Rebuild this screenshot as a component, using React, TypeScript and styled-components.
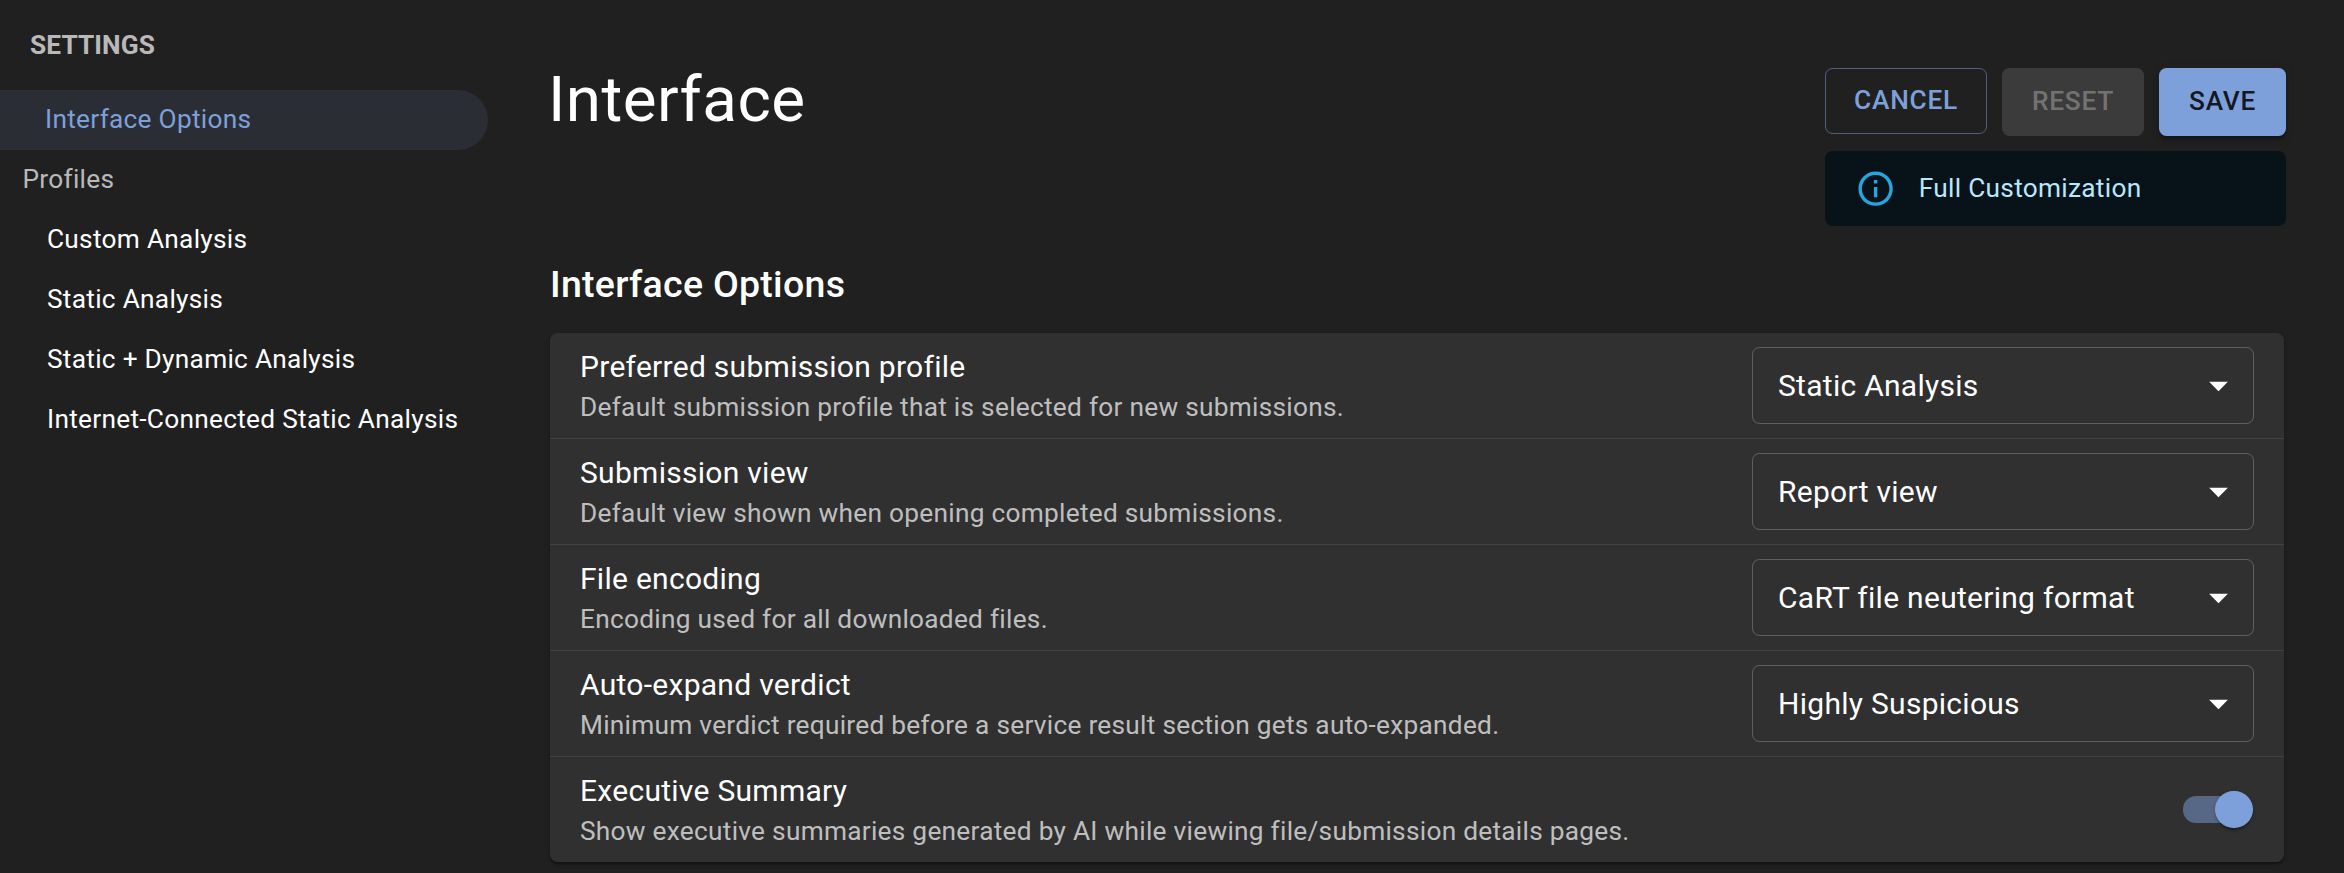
import React, { useState } from "react";
import styled, { createGlobalStyle } from "styled-components";

const GlobalStyle = createGlobalStyle`
  * { box-sizing: border-box; }
  body {
    margin: 0;
    background: #202020;
    color: #fff;
    font-family: Roboto, "Liberation Sans", sans-serif;
    font-size: 26.25px;
    overflow: hidden;
  }
`;

const Page = styled.div`
  display: flex;
  height: 873px;
  overflow: hidden;
`;

const Sidebar = styled.nav`
  width: 488px;
  flex: none;
  display: flex;
  flex-direction: column;
`;

const SidebarTitle = styled.div`
  height: 90px;
  padding-left: 30px;
  line-height: 90px;
  font-weight: 700;
  letter-spacing: 0.004em;
  color: rgba(255, 255, 255, 0.7);
`;

const NavGroup = styled.div`
  height: 60px;
  padding-left: 22.5px;
  line-height: 58px;
  letter-spacing: 0.01071em;
  color: rgba(255, 255, 255, 0.7);
`;

const NavItem = styled.a<{ $active?: boolean }>`
  height: 60px;
  padding-left: ${(p) => (p.$active ? 45 : 47)}px;
  line-height: 58px;
  letter-spacing: 0.01071em;
  white-space: nowrap;
  border-radius: 0 30px 30px 0;
  color: ${(p) => (p.$active ? "#7da0db" : "#fff")};
  background: ${(p) => (p.$active ? "#2b2d35" : "transparent")};
`;

const Main = styled.main`
  width: 1736px;
  margin-left: 62px;
  flex: none;
`;

const Header = styled.header`
  display: flex;
  justify-content: space-between;
  padding-top: 68px;
  height: 246px;
`;

const Title = styled.h1`
  margin: -7px 0 0 -2px;
  font-size: 63.75px;
  font-weight: 400;
  line-height: 78px;
  letter-spacing: 0.00735em;
`;

const Actions = styled.div`
  display: flex;
  flex-direction: column;
  gap: 15px;
`;

const ButtonRow = styled.div`
  display: flex;
  align-items: flex-start;
  gap: 15px;
`;

const Button = styled.button<{ $variant: "outlined" | "contained" }>`
  height: ${(p) => (p.$variant === "outlined" ? 66 : 68)}px;
  padding: 0 ${(p) => (p.$variant === "outlined" ? "28px 2px" : "30px 3px")};
  border: ${(p) => (p.$variant === "outlined" ? "1px solid rgba(125, 160, 219, 0.5)" : "0")};
  border-radius: 7.5px;
  background: ${(p) => (p.$variant === "outlined" ? "transparent" : "#7da0db")};
  color: ${(p) => (p.$variant === "outlined" ? "#7da0db" : "rgba(0, 0, 0, 0.87)")};
  font: 500 26.25px Roboto, "Liberation Sans", sans-serif;
  letter-spacing: 0.02857em;
  box-shadow: ${(p) =>
    p.$variant === "outlined"
      ? "none"
      : "0 5.6px 1.9px -3.75px rgba(0,0,0,.2), 0 3.75px 3.75px rgba(0,0,0,.14), 0 1.9px 9.4px rgba(0,0,0,.12)"};

  &:disabled {
    background: rgba(255, 255, 255, 0.12);
    color: rgba(255, 255, 255, 0.3);
    box-shadow: none;
  }
`;

const Alert = styled.div`
  display: flex;
  align-items: center;
  height: 75px;
  padding: 0 30px;
  gap: 22.5px;
  border-radius: 7.5px;
  background: #071318;
  color: #b8e7fb;
  letter-spacing: 0.01071em;

  svg {
    width: 41.25px;
    height: 41.25px;
    fill: #29b6f6;
    opacity: 0.9;
  }
`;

const AlertText = styled.span`
  padding-bottom: 2px;
`;

const SectionTitle = styled.h2`
  height: 87px;
  margin: 0;
  font-size: 37.5px;
  font-weight: 500;
  line-height: 76px;
  letter-spacing: 0.0075em;
`;

const Card = styled.section`
  width: 1734px;
  border-radius: 7.5px;
  background: #303030;
  box-shadow: 0 3.75px 1.9px -1.9px rgba(0,0,0,.2), 0 1.9px 1.9px rgba(0,0,0,.14), 0 1.9px 5.6px rgba(0,0,0,.12);
`;

const Row = styled.div`
  display: flex;
  align-items: center;
  justify-content: space-between;
  height: 106px;
  padding: 0 30px;
  border-bottom: 1px solid rgba(255, 255, 255, 0.09);

  &:last-child {
    height: 105px;
    border-bottom: 0;
  }
`;

const RowTitle = styled.div`
  font-size: 30px;
  line-height: 45px;
  letter-spacing: 0.00938em;
`;

const RowText = styled.div`
  line-height: 37.5px;
  letter-spacing: 0.0103em;
  color: rgba(255, 255, 255, 0.7);
`;

const Select = styled.div`
  display: flex;
  align-items: center;
  justify-content: space-between;
  width: 502px;
  height: 77px;
  padding: 0 12px 0 25px;
  border: 1px solid rgba(255, 255, 255, 0.23);
  border-radius: 7.5px;
  font-size: 30px;
  letter-spacing: 0.00938em;

  svg {
    width: 45px;
    height: 45px;
    fill: #fff;
  }
`;

const Switch = styled.button<{ $on: boolean }>`
  display: flex;
  align-items: center;
  justify-content: ${(p) => (p.$on ? "flex-end" : "flex-start")};
  width: 63.75px;
  height: 26.25px;
  margin-right: 7px;
  padding: 0;
  border: 0;
  border-radius: 13.125px;
  background: ${(p) => (p.$on ? "#566886" : "#5a5a5a")};
`;

const Thumb = styled.span`
  flex: none;
  width: 37.5px;
  height: 37.5px;
  margin-right: -5.5px;
  border-radius: 50%;
  background: #7da0db;
  box-shadow: 0 3.75px 1.9px -1.9px rgba(0,0,0,.2), 0 1.9px 1.9px rgba(0,0,0,.14), 0 1.9px 5.6px rgba(0,0,0,.12);
`;

const profiles = [
  "Custom Analysis",
  "Static Analysis",
  "Static + Dynamic Analysis",
  "Internet-Connected Static Analysis",
];

const options = [
  {
    title: "Preferred submission profile",
    text: "Default submission profile that is selected for new submissions.",
    value: "Static Analysis",
  },
  {
    title: "Submission view",
    text: "Default view shown when opening completed submissions.",
    value: "Report view",
  },
  {
    title: "File encoding",
    text: "Encoding used for all downloaded files.",
    value: "CaRT file neutering format",
  },
  {
    title: "Auto-expand verdict",
    text: "Minimum verdict required before a service result section gets auto-expanded.",
    value: "Highly Suspicious",
  },
];

export default function App() {
  const [summary, setSummary] = useState(true);
  return (
    <>
      <GlobalStyle />
      <Page>
        <Sidebar>
          <SidebarTitle>SETTINGS</SidebarTitle>
          <NavItem $active>Interface Options</NavItem>
          <NavGroup>Profiles</NavGroup>
          {profiles.map((name) => (
            <NavItem key={name}>{name}</NavItem>
          ))}
        </Sidebar>
        <Main>
          <Header>
            <Title>Interface</Title>
            <Actions>
              <ButtonRow>
                <Button $variant="outlined">CANCEL</Button>
                <Button $variant="contained" disabled>RESET</Button>
                <Button $variant="contained">SAVE</Button>
              </ButtonRow>
              <Alert>
                <svg viewBox="0 0 24 24">
                  <path d="M11 7h2v2h-2zm0 4h2v6h-2zm1-9C6.48 2 2 6.48 2 12s4.48 10 10 10 10-4.48 10-10S17.52 2 12 2zm0 18c-4.41 0-8-3.59-8-8s3.59-8 8-8 8 3.59 8 8-3.59 8-8 8z" />
                </svg>
                <AlertText>Full Customization</AlertText>
              </Alert>
            </Actions>
          </Header>
          <SectionTitle>Interface Options</SectionTitle>
          <Card>
            {options.map((o) => (
              <Row key={o.title}>
                <div>
                  <RowTitle>{o.title}</RowTitle>
                  <RowText>{o.text}</RowText>
                </div>
                <Select>
                  <span>{o.value}</span>
                  <svg viewBox="0 0 24 24">
                    <path d="m7 10 5 5 5-5z" />
                  </svg>
                </Select>
              </Row>
            ))}
            <Row>
              <div>
                <RowTitle>Executive Summary</RowTitle>
                <RowText>
                  Show executive summaries generated by AI while viewing file/submission details pages.
                </RowText>
              </div>
              <Switch $on={summary} onClick={() => setSummary(!summary)} aria-label="Executive Summary">
                <Thumb />
              </Switch>
            </Row>
          </Card>
        </Main>
      </Page>
    </>
  );
}
